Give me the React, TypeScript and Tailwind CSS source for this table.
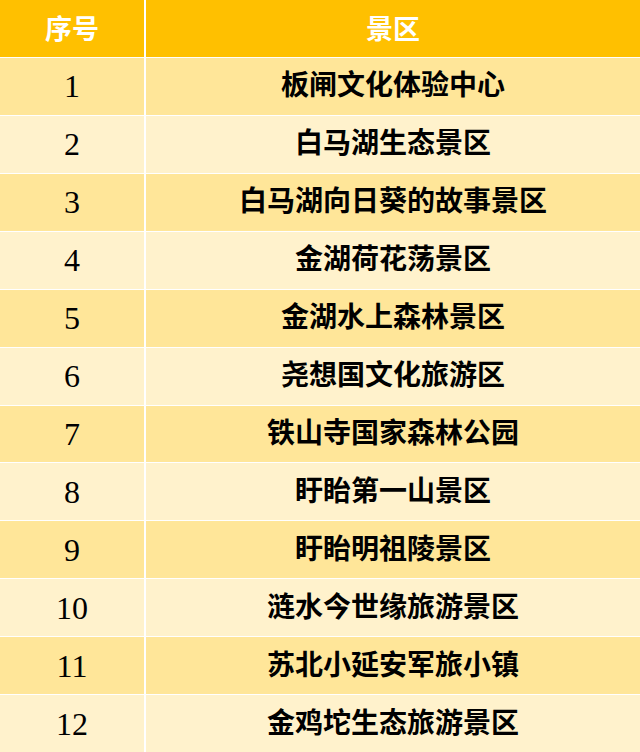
import React from "react";

const rows = [
  "板闸文化体验中心",
  "白马湖生态景区",
  "白马湖向日葵的故事景区",
  "金湖荷花荡景区",
  "金湖水上森林景区",
  "尧想国文化旅游区",
  "铁山寺国家森林公园",
  "盱眙第一山景区",
  "盱眙明祖陵景区",
  "涟水今世缘旅游景区",
  "苏北小延安军旅小镇",
  "金鸡坨生态旅游景区",
];

export default function App() {
  return (
    <div className="w-[640px] h-[752px] bg-white grid grid-cols-[144px_1fr] grid-rows-[57px_repeat(12,1fr)] gap-x-[2px] gap-y-[1px] overflow-hidden">
      <div className="bg-[#FFC000] flex items-center justify-center text-white text-[27px] font-bold [font-family:'Noto_Sans_CJK_SC',sans-serif]">
        序号
      </div>
      <div className="bg-[#FFC000] flex items-center justify-center text-white text-[27px] font-bold [font-family:'Noto_Sans_CJK_SC',sans-serif]">
        景区
      </div>
      {rows.map((name, i) => {
        const bg = i % 2 === 0 ? "bg-[#FFE699]" : "bg-[#FFF2CC]";
        return (
          <React.Fragment key={i}>
            <div
              className={`${bg} flex items-center justify-center text-black text-[32px] leading-none [font-family:'Liberation_Serif',serif]`}
            >
              {i + 1}
            </div>
            <div
              className={`${bg} flex items-center justify-center text-black text-[28px] font-bold [font-family:'Liberation_Serif','Noto_Sans_CJK_SC',serif]`}
            >
              {name}
            </div>
          </React.Fragment>
        );
      })}
    </div>
  );
}
